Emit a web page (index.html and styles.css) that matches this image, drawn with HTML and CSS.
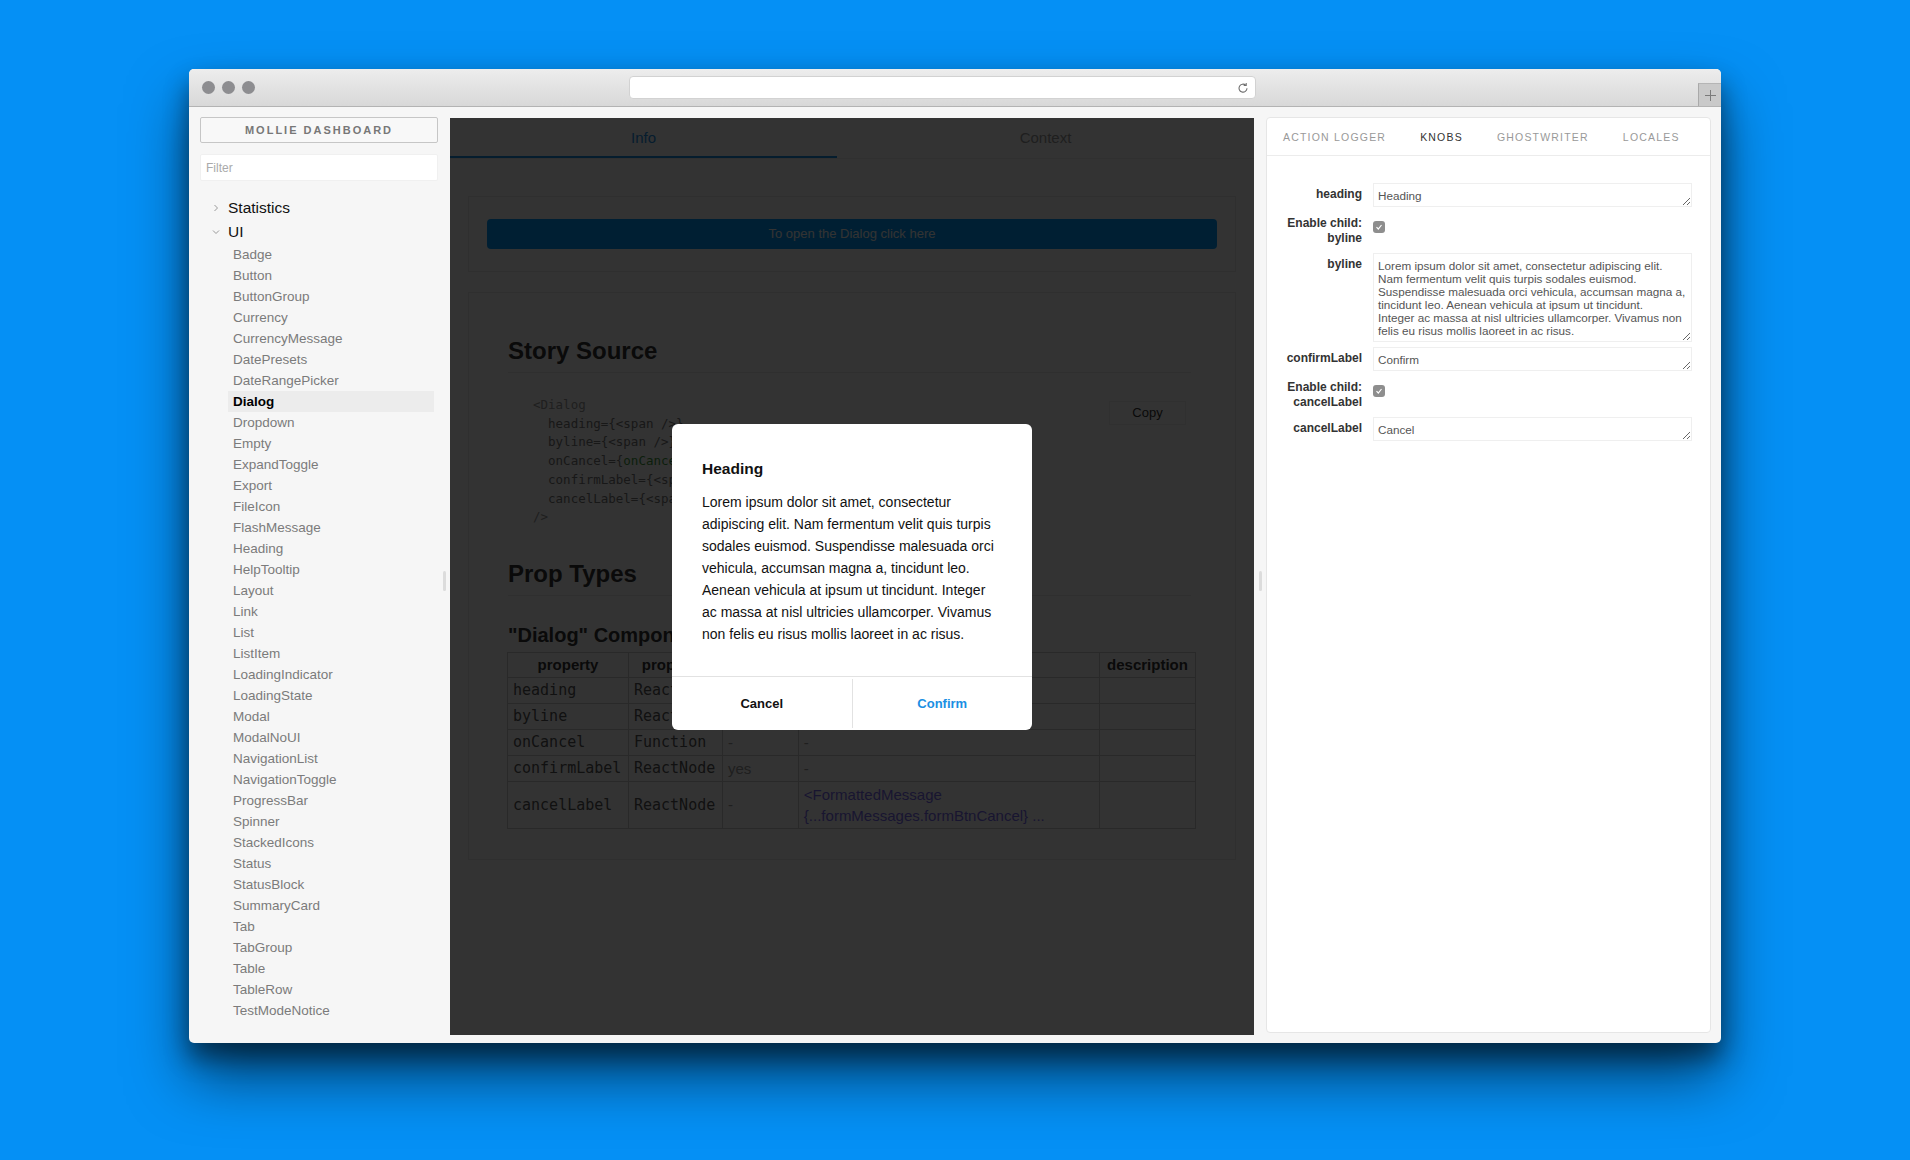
FILE: index.html
```html
<!DOCTYPE html>
<html lang="en">
<head>
    <meta charset="UTF-8">
    <title>Mollie Dashboard - Dialog</title>
    <link rel="stylesheet" href="styles.css">
</head>
<body>
<div class="window">
    <div class="titlebar">
        <div class="lights"><span></span><span></span><span></span></div>
        <div class="urlbar">
            <svg class="reload" width="12" height="12" viewBox="0 0 12 12">
                <path d="M10 6.3a4 4 0 1 1-1.3-3.1" fill="none" stroke="#6f6f6f" stroke-width="1.1"/>
                <path d="M9.2 1v2.5H6.7" fill="none" stroke="#6f6f6f" stroke-width="1.1"/>
            </svg>
        </div>
        <div class="newtab">
            <svg width="11" height="11" viewBox="0 0 11 11">
                <path d="M5.5 0v11M0 5.5h11" stroke="#7a7a7a" stroke-width="1"/>
            </svg>
        </div>
    </div>

    <div class="app">
        <aside class="sidebar">
            <div class="brand">MOLLIE DASHBOARD</div>
            <input class="filter" type="text" placeholder="Filter">
            <ul class="kinds">
                <li class="kind">
                    <svg width="8" height="8" viewBox="0 0 8 8"><path d="M2.5 1l3 3-3 3" fill="none" stroke="#999" stroke-width="1"/></svg>
                    Statistics
                </li>
                <li class="kind">
                    <svg width="8" height="8" viewBox="0 0 8 8"><path d="M1 2.5l3 3 3-3" fill="none" stroke="#999" stroke-width="1"/></svg>
                    UI
                </li>
            </ul>
            <ul class="stories">
                <li>Badge</li>
                <li>Button</li>
                <li>ButtonGroup</li>
                <li>Currency</li>
                <li>CurrencyMessage</li>
                <li>DatePresets</li>
                <li>DateRangePicker</li>
                <li class="active">Dialog</li>
                <li>Dropdown</li>
                <li>Empty</li>
                <li>ExpandToggle</li>
                <li>Export</li>
                <li>FileIcon</li>
                <li>FlashMessage</li>
                <li>Heading</li>
                <li>HelpTooltip</li>
                <li>Layout</li>
                <li>Link</li>
                <li>List</li>
                <li>ListItem</li>
                <li>LoadingIndicator</li>
                <li>LoadingState</li>
                <li>Modal</li>
                <li>ModalNoUI</li>
                <li>NavigationList</li>
                <li>NavigationToggle</li>
                <li>ProgressBar</li>
                <li>Spinner</li>
                <li>StackedIcons</li>
                <li>Status</li>
                <li>StatusBlock</li>
                <li>SummaryCard</li>
                <li>Tab</li>
                <li>TabGroup</li>
                <li>Table</li>
                <li>TableRow</li>
                <li>TestModeNotice</li>
            </ul>
        </aside>

        <div class="splitter"><span></span></div>

        <main class="preview">
            <div class="info-tabs">
                <div class="tab active">Info</div>
                <div class="tab">Context</div>
            </div>

            <div class="story">
                <div class="open-btn">To open the Dialog click here</div>
            </div>

            <div class="info">
                <h1>Story Source</h1>
                <div class="source">
<pre><span class="tag">&lt;Dialog</span>
  <span class="attr">heading=</span>{<span class="attr">&lt;span /&gt;</span>}
  <span class="attr">byline=</span>{<span class="attr">&lt;span /&gt;</span>}
  <span class="attr">onCancel=</span>{<span class="fn">onCancel</span>}
  <span class="attr">confirmLabel=</span>{<span class="attr">&lt;span /&gt;</span>}
  <span class="attr">cancelLabel=</span>{<span class="attr">&lt;span /&gt;</span>}
<span class="tag">/&gt;</span></pre>
                    <div class="copy">Copy</div>
                </div>

                <h1 class="props-title">Prop Types</h1>
                <h2>"Dialog" Component</h2>
                <table class="props">
                    <tr>
                        <th class="c1">property</th>
                        <th class="c2">propType</th>
                        <th class="c3">required</th>
                        <th class="c4">default</th>
                        <th class="c5">description</th>
                    </tr>
                    <tr><td class="mono">heading</td><td class="mono">ReactNode</td><td class="dim">yes</td><td class="dim">-</td><td></td></tr>
                    <tr><td class="mono">byline</td><td class="mono">ReactNode</td><td class="dim">yes</td><td class="dim">-</td><td></td></tr>
                    <tr><td class="mono">onCancel</td><td class="mono">Function</td><td class="dim">-</td><td class="dim">-</td><td></td></tr>
                    <tr><td class="mono">confirmLabel</td><td class="mono">ReactNode</td><td class="dim">yes</td><td class="dim">-</td><td></td></tr>
                    <tr class="tall"><td class="mono">cancelLabel</td><td class="mono">ReactNode</td><td class="dim">-</td><td class="value">&lt;FormattedMessage<br>{...formMessages.formBtnCancel} ...</td><td></td></tr>
                </table>
            </div>

            <div class="backdrop">
                <div class="dialog">
                    <h3>Heading</h3>
                    <p>Lorem ipsum dolor sit amet, consectetur adipiscing elit. Nam fermentum velit quis turpis sodales euismod. Suspendisse malesuada orci vehicula, accumsan magna a, tincidunt leo. Aenean vehicula at ipsum ut tincidunt. Integer ac massa at nisl ultricies ullamcorper. Vivamus non felis eu risus mollis laoreet in ac risus.</p>
                    <div class="dialog-footer">
                        <button class="cancel">Cancel</button>
                        <button class="confirm">Confirm</button>
                    </div>
                </div>
            </div>
        </main>

        <div class="splitter"><span></span></div>

        <section class="addons">
            <div class="addon-tabs">
                <span>ACTION LOGGER</span>
                <span class="active">KNOBS</span>
                <span>GHOSTWRITER</span>
                <span>LOCALES</span>
            </div>
            <div class="knobs">
                <label>heading</label>
                <textarea class="line">Heading</textarea>

                <label class="two">Enable child:<br>byline</label>
                <span class="check"><svg width="8" height="8" viewBox="0 0 8 8"><path d="M1.5 4.2l1.8 1.8 3.2-4" fill="none" stroke="#fff" stroke-width="1.2"/></svg></span>

                <label>byline</label>
                <textarea class="block">Lorem ipsum dolor sit amet, consectetur adipiscing elit.
Nam fermentum velit quis turpis sodales euismod.
Suspendisse malesuada orci vehicula, accumsan magna a,
tincidunt leo. Aenean vehicula at ipsum ut tincidunt.
Integer ac massa at nisl ultricies ullamcorper. Vivamus non
felis eu risus mollis laoreet in ac risus.</textarea>

                <label>confirmLabel</label>
                <textarea class="line">Confirm</textarea>

                <label class="two">Enable child:<br>cancelLabel</label>
                <span class="check"><svg width="8" height="8" viewBox="0 0 8 8"><path d="M1.5 4.2l1.8 1.8 3.2-4" fill="none" stroke="#fff" stroke-width="1.2"/></svg></span>

                <label>cancelLabel</label>
                <textarea class="line">Cancel</textarea>
            </div>
        </section>
    </div>
</div>
</body>
</html>
```

FILE: styles.css
```css
* {
    box-sizing: border-box;
}
body {
    margin: 0;
    padding: 69px 0 0 189px;
    width: 1910px;
    height: 1160px;
    overflow: hidden;
    background-color: #0590f5;
    font-family: "Liberation Sans", Arial, sans-serif;
}
ul {
    list-style: none;
    margin: 0;
    padding: 0;
}

/* browser window */
.window {
    width: 1532px;
    height: 974px;
    display: flex;
    flex-direction: column;
    border-radius: 5px;
    overflow: hidden;
    background: #f6f6f6;
    box-shadow: 0 14px 24px rgba(0,0,0,0.45), 0 34px 60px rgba(0,0,0,0.55);
}
.titlebar {
    height: 38px;
    flex: none;
    display: flex;
    align-items: center;
    background: linear-gradient(#ededed, #d8d8d8);
    border-bottom: 1px solid #b3b3b3;
}
.lights {
    display: flex;
    gap: 7px;
    padding-left: 13px;
}
.lights span {
    width: 13px;
    height: 13px;
    border-radius: 50%;
    background: #8d8d90;
}
.urlbar {
    width: 627px;
    height: 23px;
    margin-left: 374px;
    display: flex;
    align-items: center;
    justify-content: flex-end;
    padding-right: 6px;
    background: #fff;
    border: 1px solid #d2d2d2;
    border-radius: 4px;
}
.newtab {
    width: 23px;
    height: 23px;
    margin-left: auto;
    align-self: flex-end;
    display: flex;
    align-items: center;
    justify-content: center;
    background: #c9c9c9;
    border-left: 1px solid #a9a9a9;
    border-top: 1px solid #b5b5b5;
}

/* storybook layout */
.app {
    flex: 1;
    display: flex;
    padding: 10px 10px 8px 11px;
    min-height: 0;
}
.splitter {
    width: 12px;
    flex: none;
    display: flex;
    align-items: center;
    justify-content: center;
    padding-top: 10px;
}
.splitter span {
    width: 3px;
    height: 20px;
    border-radius: 2px;
    background: #dcdcdc;
}

/* sidebar */
.sidebar {
    width: 238px;
    flex: none;
    overflow: hidden;
}
.brand {
    height: 26px;
    line-height: 24px;
    text-align: center;
    border: 1px solid #c6c6c6;
    border-radius: 2px;
    background: #f8f8f8;
    color: #777;
    font-size: 11px;
    font-weight: bold;
    letter-spacing: 2px;
}
.filter {
    display: block;
    width: 100%;
    height: 27px;
    margin-top: 11px;
    padding: 0 5px;
    border: 1px solid #f0f0f0;
    border-radius: 2px;
    background: #fff;
    font-family: inherit;
    font-size: 12px;
}
.filter::placeholder {
    color: #aaa;
}
.kinds {
    margin-top: 15px;
}
.kind {
    display: flex;
    align-items: center;
    padding-left: 12px;
    line-height: 24px;
    font-size: 15.5px;
    color: #111;
}
.kind svg {
    margin-right: 8px;
}
.stories {
    margin: 0 4px 0 28px;
}
.stories li {
    padding-left: 5px;
    line-height: 21px;
    font-size: 13.5px;
    color: #7b7b7b;
}
.stories li.active {
    background: #ececec;
    color: #000;
    font-weight: bold;
}

/* preview iframe */
.preview {
    width: 804px;
    flex: none;
    margin-top: 1px;
    position: relative;
    overflow: hidden;
    background: #fff;
}
.info-tabs {
    display: flex;
    height: 41px;
    border-bottom: 1px solid #eee;
}
.info-tabs .tab {
    width: 387px;
    text-align: center;
    line-height: 39px;
    font-size: 15px;
    color: #9a9a9a;
}
.info-tabs .tab + .tab {
    flex: 1;
}
.info-tabs .tab.active {
    color: #1b8fe6;
    border-bottom: 2px solid #1b8fe6;
}
.story {
    height: 76px;
    margin: 37px 18px 0;
    padding: 22px 18px;
    border: 1px solid #ececec;
}
.open-btn {
    height: 30px;
    line-height: 30px;
    text-align: center;
    border-radius: 4px;
    background: #009bff;
    color: #fff;
    font-size: 13px;
}
.info {
    margin: 20px 18px 0;
    padding: 0 44px 30px 39px;
    border: 1px solid #ececec;
    color: #333;
}
.info h1 {
    margin: 43px 0 0;
    padding-bottom: 6px;
    font-size: 24px;
    line-height: 30px;
    border-bottom: 1px solid #ececec;
}
.info h1.props-title {
    margin-top: 17px;
}
.source {
    display: flex;
    align-items: flex-start;
    margin-top: 8px;
    padding: 15px 5px 15px 25px;
}
.source pre {
    margin: 0;
    font-family: "DejaVu Sans Mono", monospace;
    font-size: 12.5px;
    line-height: 18.7px;
    color: #777;
}
.source .tag {
    color: #999;
}
.source .attr {
    color: #777;
}
.source .fn {
    color: #3f9a3f;
}
.copy {
    margin-left: auto;
    margin-top: 5px;
    width: 77px;
    height: 24px;
    line-height: 22px;
    text-align: center;
    border: 1px solid #eee;
    font-size: 13px;
    color: #333;
}
.info h2 {
    margin: 27px 0 0;
    font-size: 20px;
    line-height: 24px;
}
.props {
    width: 689px;
    margin: 5px 0 0 -1px;
    border-collapse: collapse;
    font-size: 15px;
}
.props th, .props td {
    height: 26px;
    padding: 0 5px;
    border: 1px solid #ccc;
    text-align: left;
}
.props th {
    height: 25px;
    text-align: center;
}
.props .c1 { width: 121px; }
.props .c2 { width: 94px; }
.props .c3 { width: 76px; }
.props .c4 { width: 302px; }
.props .c5 { width: 96px; }
.props .mono {
    font-family: "DejaVu Sans Mono", monospace;
    color: #555;
}
.props .dim {
    color: #999;
}
.props .value {
    color: #7a6cf0;
    line-height: 21px;
}
.props tr.tall td {
    height: 47px;
}

/* dialog */
.backdrop {
    position: absolute;
    inset: 0;
    display: flex;
    align-items: center;
    justify-content: center;
    background: rgba(0,0,0,0.8);
}
.dialog {
    width: 360px;
    background: #fff;
    border-radius: 6px;
    overflow: hidden;
    color: #111;
}
.dialog h3 {
    margin: 34px 30px 0;
    font-size: 15.5px;
    line-height: 22px;
}
.dialog p {
    margin: 11px 30px 31px;
    font-size: 14px;
    line-height: 22px;
}
.dialog-footer {
    display: flex;
    height: 54px;
    border-top: 1px solid #e2e2e2;
}
.dialog-footer button {
    flex: 1;
    border: 0;
    background: none;
    font-family: inherit;
    font-size: 13px;
    font-weight: bold;
    color: #111;
}
.dialog-footer .confirm {
    color: #1a8fe3;
    border-left: 1px solid #e2e2e2;
    margin: 2px 0;
}

/* addons panel */
.addons {
    width: 445px;
    flex: none;
    margin-bottom: 2px;
    background: #fff;
    border: 1px solid #e6e6e6;
    border-radius: 4px;
}
.addon-tabs {
    display: flex;
    align-items: center;
    gap: 34px;
    height: 38px;
    padding-left: 16px;
    border-bottom: 1px solid #ececec;
}
.addon-tabs span {
    font-size: 10.5px;
    letter-spacing: 1.2px;
    color: #999;
}
.addon-tabs span.active {
    color: #333;
}
.knobs {
    display: grid;
    grid-template-columns: 90px 1fr;
    column-gap: 11px;
    row-gap: 5px;
    padding: 27px 18px 0 5px;
}
.knobs label {
    padding-top: 4px;
    text-align: right;
    font-size: 12px;
    font-weight: bold;
    line-height: 15px;
    color: #333;
}
.knobs label.two {
    padding-bottom: 2px;
}
.knobs textarea {
    display: block;
    width: 100%;
    padding: 5px 2px 3px 4px;
    border: 1px solid #efefef;
    border-radius: 0;
    overflow: hidden;
    resize: vertical;
    font-family: inherit;
    font-size: 11.7px;
    line-height: 13px;
    color: #555;
}
.knobs textarea.line {
    height: 24px;
}
.knobs textarea.block {
    height: 89px;
}
.check {
    width: 12px;
    height: 12px;
    margin-top: 9px;
    display: flex;
    align-items: center;
    justify-content: center;
    border-radius: 3px;
    background: #8e8e8e;
}
```
